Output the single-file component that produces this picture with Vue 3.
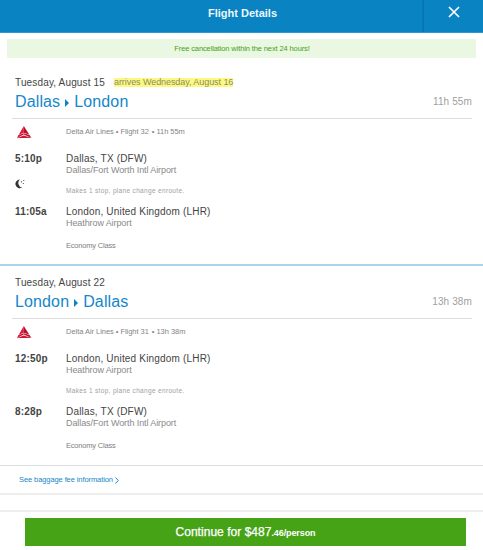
<script setup>
const flights = [
  {
    date: 'Tuesday, August 15', arrives: 'arrives Wednesday, August 16', from: 'Dallas', to: 'London',
    duration: '11h 55m', carrier: 'Delta Air Lines • Flight 32', night: true,
    depart: { time: '5:10p', city: 'Dallas, TX (DFW)', airport: 'Dallas/Fort Worth Intl Airport' },
    land: { time: '11:05a', city: 'London, United Kingdom (LHR)', airport: 'Heathrow Airport' },
  },
  {
    date: 'Tuesday, August 22', arrives: '', from: 'London', to: 'Dallas',
    duration: '13h 38m', carrier: 'Delta Air Lines • Flight 31', night: false,
    depart: { time: '12:50p', city: 'London, United Kingdom (LHR)', airport: 'Heathrow Airport' },
    land: { time: '8:28p', city: 'Dallas, TX (DFW)', airport: 'Dallas/Fort Worth Intl Airport' },
  },
]
</script>

<template>
  <main class="page">
    <header class="bar">
      <h1>Flight Details</h1>
      <button class="close" aria-label="Close">
        <svg width="12" height="12" viewBox="0 0 12 12"><path d="M1 1 11 11M11 1 1 11" stroke="#fff" stroke-width="1.7" fill="none" /></svg>
      </button>
    </header>
    <div class="notice"><span>Free cancellation within the next 24 hours!</span></div>

    <section v-for="f in flights" :key="f.date" class="leg">
      <div class="date"><span>{{ f.date }}</span><mark v-if="f.arrives">{{ f.arrives }}</mark></div>
      <div class="route">
        <h2>
          <span>{{ f.from }}</span>
          <svg width="4" height="8" viewBox="0 0 4 8"><path d="M0 0 4 4 0 8Z" fill="#0a84c4" /></svg>
          <span>{{ f.to }}</span>
        </h2>
        <span class="total">{{ f.duration }}</span>
      </div>
      <div class="row carrier">
        <div class="left">
          <svg class="delta" width="15" height="12" viewBox="0 0 15 12">
            <path d="M6.8 0 12.2 8.6 6.8 6.8Z" fill="#b5122f" />
            <path d="M6.8 0V6.8L1.8 8.7Z" fill="#e0183a" />
            <path d="M1.5 9.1 6.8 7.2 6.8 8.6 0 11.9Z" fill="#d01535" />
            <path d="M6.8 7.2 12.5 9.1 14.4 11.9 6.8 8.6Z" fill="#b5122f" />
            <path d="M0 11.9 6.8 9.5 14.4 11.9Z" fill="#d01535" />
          </svg>
        </div>
        <span class="flight"><span>{{ f.carrier }}</span><span>• {{ f.duration }}</span></span>
      </div>
      <div class="row stop">
        <b class="left">{{ f.depart.time }}</b>
        <div><p class="city">{{ f.depart.city }}</p><p class="airport">{{ f.depart.airport }}</p></div>
      </div>
      <div class="row via">
        <div class="left">
          <svg v-if="f.night" class="moon" width="11" height="10" viewBox="0 0 11 10">
            <path d="M5 .5A4.4 4.4 0 1 0 7.2 8.6 4.6 4.6 0 0 1 5 .5Z" fill="#333" />
            <path d="M5.9 2.2h1.2v1.2H5.9zM8.2 1h1.1v1.1H8.2zM7.8 4h1.1v1.1H7.8z" fill="#666" />
          </svg>
        </div>
        <span class="note">Makes 1 stop, plane change enroute.</span>
      </div>
      <div class="row stop">
        <b class="left">{{ f.land.time }}</b>
        <div><p class="city">{{ f.land.city }}</p><p class="airport">{{ f.land.airport }}</p></div>
      </div>
      <div class="row cabin"><div class="left"></div><span>Economy Class</span></div>
    </section>

    <div class="baggage">
      <a>See baggage fee information</a>
      <svg width="4" height="7" viewBox="0 0 4 7"><path d="M.5.5 3.3 3.5.5 6.5" fill="none" stroke="#1a87c8" /></svg>
    </div>
    <footer>
      <button class="go"><span class="main">Continue for <i>$487</i></span><span class="cents">.46/person</span></button>
    </footer>
  </main>
</template>

<style>
body { margin: 0; background: #fff; }
</style>
<style scoped>
.page { width: 483px; height: 550px; overflow: hidden; font-family: "Liberation Sans", Arial, sans-serif; color: #444; background: #fff; white-space: nowrap; }
* { box-sizing: border-box; }
h1, h2, p { margin: 0; font-weight: normal; }
button { border: 0; padding: 0; font-family: inherit; }
svg { display: block; flex: none; }
.bar { height: 33px; display: grid; grid-template-columns: 61px 1fr 61px; background: #0a83c3; border-bottom: 1px solid #2b98d3; }
h1 { grid-column: 2; font-size: 11px; font-weight: bold; line-height: 26px; text-align: center; color: #edf7fc; padding-left: 2px; }
.close { background: none; border-left: 2px solid #0876b3; display: flex; justify-content: center; padding-top: 6px; }
.notice { margin: 6px 7px 0; height: 19px; background: #eaf7e3; color: #43a317; font-size: 7.5px; letter-spacing: -.12px; line-height: 19px; text-align: center; padding-left: 1px; }
.leg { height: 199px; padding: 9px 11px 0 12px; }
.notice + .leg { height: 208px; padding-top: 17px; border-bottom: 2px solid #a9d5eb; }
.date { display: flex; align-items: center; height: 14px; padding-left: 3px; font-size: 10px; letter-spacing: .15px; gap: 9px; }
mark { background: #fcf983; color: #8c8c65; font-size: 9px; letter-spacing: -.07px; line-height: 9px; margin-top: 1px; }
.route { height: 30px; border-bottom: 1px solid #ddd; display: flex; justify-content: space-between; padding: 3px 0 0 3px; }
h2 { display: flex; align-items: center; height: 20px; font-size: 16px; letter-spacing: .13px; color: #1587c9; gap: 5px; }
h2 svg { margin-top: 2px; }
.total { font-size: 10px; line-height: 20px; color: #a0a0a0; letter-spacing: .12px; }
.row { display: grid; grid-template-columns: 51px 1fr; padding-left: 3px; }
.left { min-width: 0; }
.carrier { height: 33px; padding-top: 7px; }
.delta { margin-left: 2px; }
.flight { display: flex; gap: 3px; font-size: 7.5px; letter-spacing: -.04px; line-height: 12px; color: #858585; }
.stop { height: 26px; font-size: 10px; line-height: 13px; }
.stop b { letter-spacing: .18px; }
.city { letter-spacing: .18px; height: 12px; }
.airport { font-size: 9px; letter-spacing: -.09px; line-height: 12px; color: #8a8a8a; }
.via { height: 27px; }
.moon { margin-top: 1px; }
.note { font-size: 6.5px; letter-spacing: .33px; line-height: 26px; color: #a0a0a0; }
.cabin { padding-top: 9px; font-size: 7.5px; letter-spacing: -.2px; line-height: 12px; color: #808080; }
.baggage { height: 30px; border-top: 1px solid #ddd; border-bottom: 2px solid #eee; padding-left: 19px; display: flex; align-items: center; gap: 2px; font-size: 7.5px; letter-spacing: -.09px; color: #1587c9; }
.baggage svg { margin-top: 2px; }
footer { margin-top: 15px; border-top: 2px solid #eee; padding: 6px 17px 0 25px; }
.go { width: 441px; height: 28px; background: #46a316; color: #fff; display: flex; justify-content: center; align-items: baseline; line-height: 28px; }
.main { font-size: 12px; letter-spacing: .03px; -webkit-text-stroke: .25px #fff; }
.main i { font-style: normal; }
.cents { font-size: 9px; font-weight: bold; letter-spacing: -.1px; }
</style>
